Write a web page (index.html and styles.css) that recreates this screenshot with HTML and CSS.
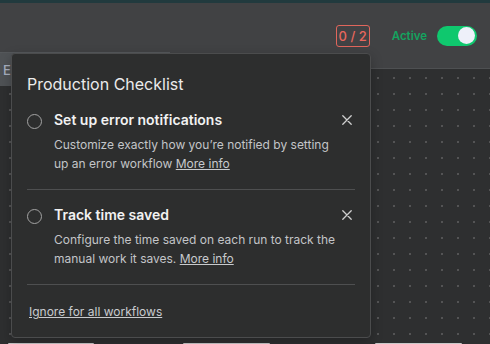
FILE: index.html
```html
<!DOCTYPE html>
<html lang="en">
<head>
  <meta charset="UTF-8" />
  <meta name="viewport" content="width=device-width, initial-scale=1.0"/>
  <title>Production Checklist</title>
  <link rel="stylesheet" href="styles.css">
</head>
<body>

<div class="app">
  <div class="app__topline"></div>

  <header class="header">
    <span class="header__badge">0 / 2</span>
    <span class="header__status">Active</span>
    <span class="toggle"><span class="toggle__knob"></span></span>
  </header>

  <div class="tabs">
    <span class="tabs__label">E</span>
  </div>

  <main class="canvas">
    <div class="canvas__footer">
      <span class="canvas__button canvas__button--one"></span>
      <span class="canvas__button canvas__button--two"></span>
      <span class="canvas__button canvas__button--three"></span>
    </div>
  </main>

  <section class="checklist">
    <h2 class="checklist__title">Production Checklist</h2>

    <div class="checklist__item">
      <span class="checklist__check"></span>
      <div class="checklist__body">
        <div class="checklist__name">Set up error notifications</div>
        <p class="checklist__text">Customize exactly how you’re notified by setting up an error workflow <a href="#" class="checklist__link">More info</a></p>
      </div>
      <button class="checklist__close" title="Dismiss">
        <svg width="10" height="10" viewBox="0 0 10 10" fill="none" stroke="currentColor" stroke-width="1.3" stroke-linecap="round">
          <path d="M0.8 0.8l8.4 8.4M9.2 0.8l-8.4 8.4"/>
        </svg>
      </button>
    </div>

    <div class="checklist__item">
      <span class="checklist__check"></span>
      <div class="checklist__body">
        <div class="checklist__name">Track time saved</div>
        <p class="checklist__text">Configure the time saved on each run to track the manual work it saves. <a href="#" class="checklist__link">More info</a></p>
      </div>
      <button class="checklist__close" title="Dismiss">
        <svg width="10" height="10" viewBox="0 0 10 10" fill="none" stroke="currentColor" stroke-width="1.3" stroke-linecap="round">
          <path d="M0.8 0.8l8.4 8.4M9.2 0.8l-8.4 8.4"/>
        </svg>
      </button>
    </div>

    <a href="#" class="checklist__ignore">Ignore for all workflows</a>
  </section>
</div>

</body>
</html>
```

FILE: styles.css
```css
* {
  box-sizing: border-box;
}
body {
  font-family: 'Inter', 'Noto Sans', sans-serif;
  background: #2e2f30;
  margin: 0;
}

.app {
  position: relative;
  width: 490px;
  height: 344px;
  display: flex;
  flex-direction: column;
  overflow: hidden;
}
.app__topline {
  height: 3px;
  background: #213a3e;
}

.header {
  height: 66px;
  background: #414244;
  border-bottom: 1px solid #4e5052;
  display: flex;
  align-items: center;
  justify-content: flex-end;
  padding: 0 13px 0 0;
  flex-shrink: 0;
}
.header__badge {
  width: 34px;
  height: 22px;
  border: 1px solid #e0665c;
  border-radius: 3px;
  color: #e8675d;
  font-size: 13px;
  font-weight: 500;
  display: flex;
  align-items: center;
  justify-content: center;
}
.header__status {
  margin: 1px 10px 0 22px;
  color: #14a35f;
  font-size: 11.5px;
  font-weight: 600;
}
.toggle {
  width: 40px;
  height: 20px;
  border-radius: 10px;
  background: #0fc86e;
  display: flex;
  align-items: center;
  justify-content: flex-end;
  padding-right: 2px;
}
.toggle__knob {
  width: 17px;
  height: 17px;
  border-radius: 50%;
  background: #eef0f9;
}

.tabs {
  position: absolute;
  top: 52px;
  left: 0;
  width: 170px;
  height: 34px;
  background: #4f5255;
  border-top: 1px solid #55585b;
  display: flex;
  align-items: center;
  padding-left: 3px;
}
.tabs__label {
  color: #a9b0c0;
  font-size: 13px;
  font-weight: 500;
}

.canvas {
  flex: 1;
  display: flex;
  flex-direction: column;
  justify-content: flex-end;
  background-color: #2e2f30;
  background-image: radial-gradient(circle, #7e7e7e 0.6px, transparent 0.8px);
  background-size: 16px 16px;
  background-position: 2px 1px;
}
.canvas__footer {
  display: flex;
  height: 1px;
  padding-left: 8px;
}
.canvas__button {
  height: 1px;
  background: #c9c9c9;
  border-radius: 2px 2px 0 0;
}
.canvas__button--one {
  width: 86px;
}
.canvas__button--two {
  width: 87px;
  margin-left: 89px;
}
.canvas__button--three {
  width: 87px;
  margin-left: 105px;
}

.checklist {
  position: absolute;
  top: 53px;
  left: 11px;
  width: 360px;
  height: 285px;
  background: #2d2e2e;
  border: 1px solid #4b4c4d;
  border-radius: 4px;
  padding: 18px 15px 0 15px;
  color: #e4e4e4;
  box-shadow: 0 4px 12px rgba(0, 0, 0, 0.25);
}
.checklist__title {
  margin: 0 0 14px;
  font-size: 16px;
  line-height: 24px;
  font-weight: 400;
  color: #ebebeb;
}
.checklist__item {
  display: flex;
  align-items: flex-start;
  padding-bottom: 16px;
  margin-bottom: 15px;
  border-bottom: 1px solid #4e4f50;
}
.checklist__check {
  width: 15px;
  height: 15px;
  margin: 4px 12px 0 0;
  border: 1.5px solid #a3a3a3;
  border-radius: 50%;
  flex-shrink: 0;
}
.checklist__body {
  flex: 1;
}
.checklist__name {
  font-size: 14px;
  line-height: 20px;
  font-weight: 600;
  color: #f2f2f2;
}
.checklist__text {
  margin: 6px 0 0;
  font-size: 12px;
  line-height: 18.6px;
  color: #c3c5c8;
}
.checklist__link {
  color: #c8cacd;
  text-decoration: underline;
}
.checklist__close {
  width: 16px;
  height: 20px;
  padding: 0 3px 0 0;
  background: transparent;
  border: none;
  color: #cfcfcf;
  display: flex;
  align-items: center;
  justify-content: flex-end;
  flex-shrink: 0;
  cursor: pointer;
}
.checklist__ignore {
  display: inline-block;
  margin-left: 2px;
  font-size: 12px;
  line-height: 20px;
  color: #c9cbce;
  text-decoration: underline;
}
```
